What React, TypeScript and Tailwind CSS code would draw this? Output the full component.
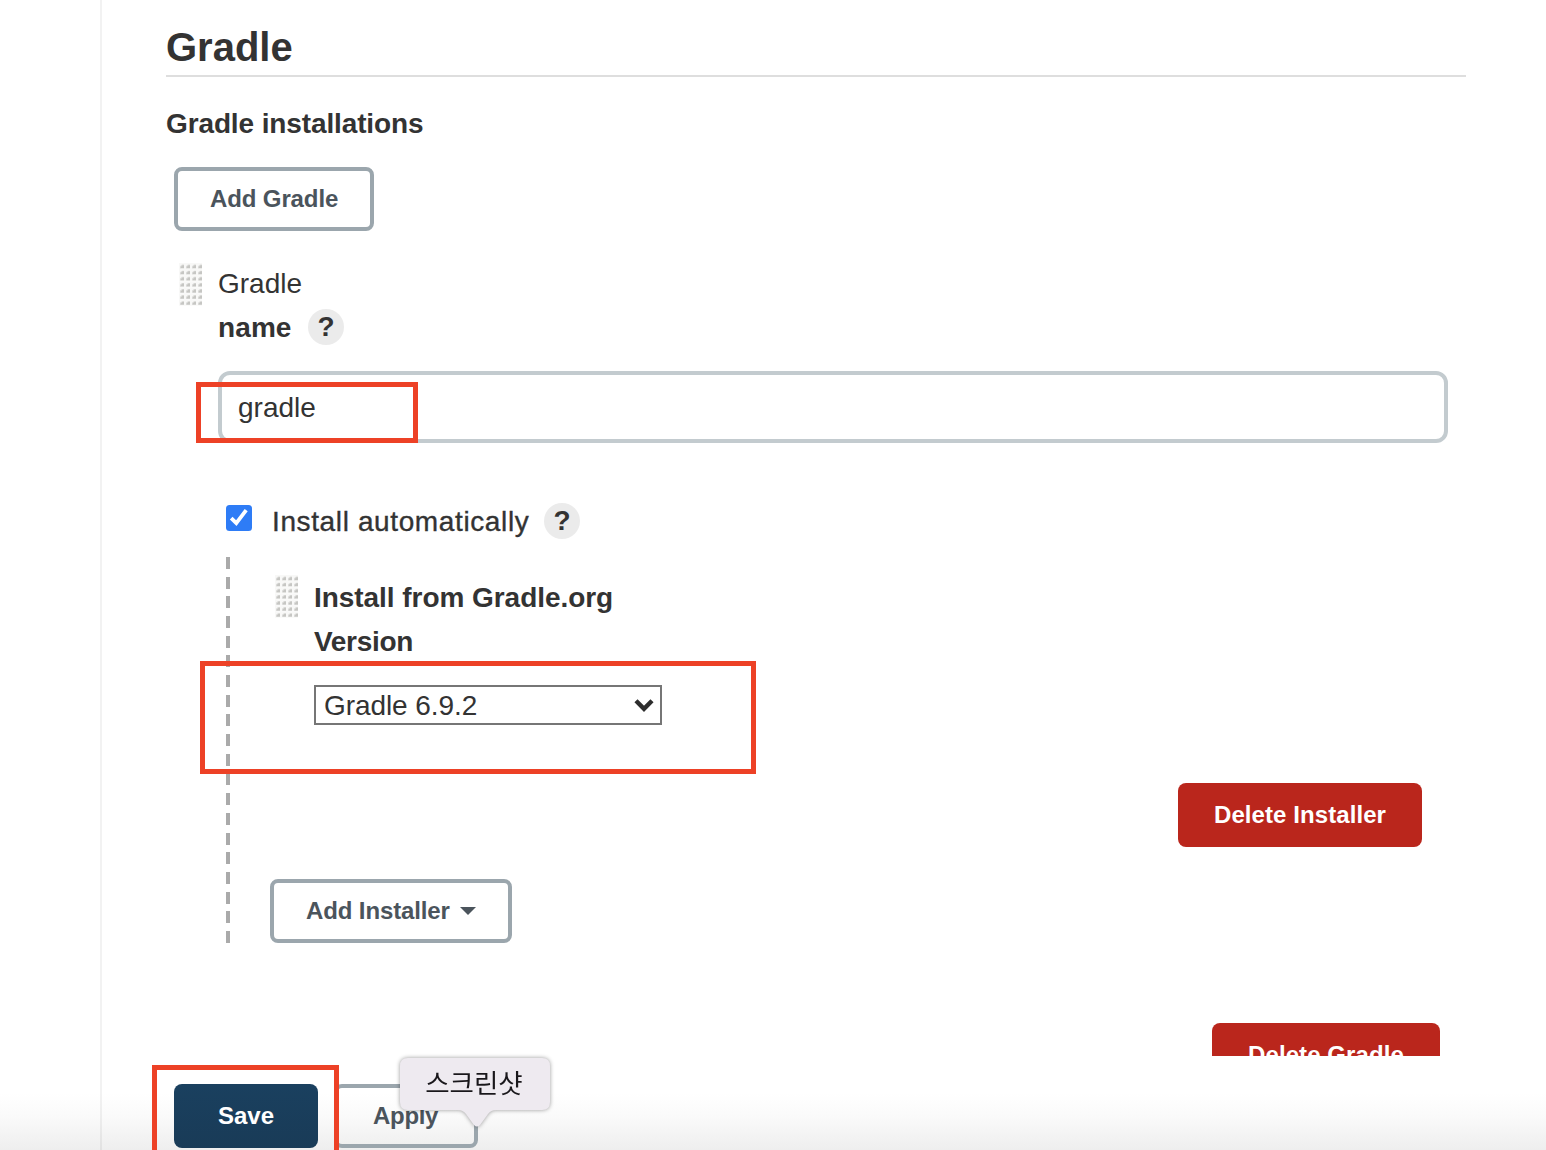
import React from "react";

function Grip({ className = "" }: { className?: string }) {
  return (
    <svg className={`block shrink-0 ${className}`} width="23" height="43" viewBox="0 0 23 43">
      {[0, 1, 2, 3, 4, 5, 6].map((r) =>
        [0, 1, 2, 3].map((c) => {
          const w = c === 3 ? 5 : 6;
          return (
            <g key={`${r}-${c}`} transform={`translate(${c * 6} ${r * 6.1})`}>
              <rect x="0" y="0" width={w} height="6.1" fill="#f8f8f7" />
              <path d="M1 5.4V3.2L3 1.6H5V5.4Z" fill="#dededc" />
              <path d="M1.8 5V4L3.6 2.2H5V5Z" fill="#c6c6c3" />
            </g>
          );
        }),
      )}
    </svg>
  );
}

function Help({ className = "" }: { className?: string }) {
  return (
    <span
      className={`flex h-9 w-9 shrink-0 items-center justify-center rounded-full bg-[#ebebeb] text-[28px] leading-9 font-bold ${className}`}
    >
      ?
    </span>
  );
}

const outlineButton =
  "flex h-16 items-center rounded-lg border-4 border-[#9ba6ad] pl-8 text-[24px] font-bold tracking-[-0.12px] whitespace-nowrap text-[#4b545c]";
const dangerButton =
  "flex h-16 items-center justify-center rounded-lg bg-[#ba261c] text-[24px] font-bold tracking-[0.08px] whitespace-nowrap text-white";

export default function App() {
  return (
    <div className="relative flex h-[1150px] w-[1546px] flex-col overflow-hidden bg-white font-['Liberation_Sans','Noto_Sans_CJK_KR',sans-serif] text-[28px] text-[#333]">
      <main className="ml-[100px] h-[1056px] shrink-0 overflow-hidden border-l-2 border-[#f2f2f2] pr-20 pl-16">
        <h1 className="h-[77px] border-b-2 border-[#dedede] pt-[17px] text-[40px] leading-[60px] font-bold">Gradle</h1>
        <h2 className="mt-[26px] h-10 leading-[42px] font-bold tracking-[-0.12px]">Gradle installations</h2>
        <button className={`mt-6 ml-2 w-[200px] ${outlineButton}`}>Add Gradle</button>

        <section className="mt-[30px] flex">
          <Grip className="mt-0.5 ml-[13px]" />
          <div className="ml-4 w-[1230px]">
            <div className="h-11 leading-[46px]">Gradle</div>
            <div className="flex h-11 items-center font-bold">
              <span className="w-[90px] pt-0.5 tracking-[0.1px]">name</span>
              <Help />
            </div>
            <div className="mt-[22px] flex h-18 items-center rounded-xl border-4 border-[#c3cbcf] pt-0.5 pl-4">gradle</div>

            <div className="mt-[60px] ml-2 flex h-9 items-center">
              <svg className="mb-[6px]" width="26" height="26" viewBox="0 0 26 26">
                <rect width="26" height="26" rx="3.5" fill="#2e7cf6" />
                <path d="M5.2 13.2 10.3 18.2 20.2 5.2" fill="none" stroke="#fff" strokeWidth="3.8" />
              </svg>
              <span className="ml-5 w-[272px] pt-0.5 tracking-[0.62px] whitespace-nowrap [-webkit-text-stroke:0.35px_#333]">
                Install automatically
              </span>
              <Help />
            </div>

            <div className="mt-[18px] ml-2 flex h-[386px] w-[1196px]">
              <div className="w-1 shrink-0 bg-[repeating-linear-gradient(to_bottom,#aaa_0px,#aaa_12px,transparent_12px,transparent_19.68px)]" />
              <div className="flex grow flex-col">
                <div className="mt-[18px] flex">
                  <Grip className="ml-[45px]" />
                  <div className="ml-4 font-bold">
                    <div className="h-11 leading-[46px] tracking-[-0.05px]">Install from Gradle.org</div>
                    <div className="h-11 leading-[46px] tracking-[-0.3px]">Version</div>
                    <div className="mt-[22px] flex h-10 w-[348px] items-center justify-between border-2 border-[#767676] pr-[6px] pl-2 font-normal">
                      <span className="pt-0.5 tracking-[-0.08px]">Gradle 6.9.2</span>
                      <svg width="20" height="14" viewBox="0 0 20 14">
                        <path d="M2 2.8 10 10.8 18 2.8" fill="none" stroke="#2d2d2d" strokeWidth="4.4" />
                      </svg>
                    </div>
                  </div>
                </div>
                <button className={`mt-[58px] w-[244px] self-end ${dangerButton}`}>Delete Installer</button>
                <button className={`mt-8 ml-10 w-[242px] ${outlineButton}`}>
                  Add Installer
                  <svg className="ml-[10px]" width="16" height="8" viewBox="0 0 16 8">
                    <path d="M0 0H16L8 8Z" fill="#4b545c" />
                  </svg>
                </button>
              </div>
            </div>
            <button className={`mt-20 ml-[994px] w-[228px] ${dangerButton}`}>Delete Gradle</button>
          </div>
        </section>
      </main>

      <footer className="h-[94px] shrink-0 bg-linear-to-b from-white from-40% via-[#fafafa] via-65% to-[#eeeeee] pl-[100px]">
        <div className="flex h-full border-l-2 border-black/5 pt-7 pl-[72px]">
          <button className="h-16 w-36 shrink-0 rounded-lg bg-linear-to-b from-[#1a405f] to-[#193b57] text-[24px] font-bold text-white">
            Save
          </button>
          <button className={`ml-4 w-36 ${outlineButton}`}>
            <span className="ml-[3px] tracking-[-0.3px]">Apply</span>
          </button>
        </div>
      </footer>

      {/* Floating screenshot hint */}
      <div className="absolute top-[1058px] left-[400px] h-[70px] w-[151px] drop-shadow-[0_0_2px_rgba(0,0,0,0.4)]">
        <svg className="absolute inset-0" width="151" height="70" viewBox="0 0 151 70">
          <path
            d="M8 0H142Q150 0 150 8V44Q150 52 142 52H96Q91 52 88 56L80 67Q77 70 74 67L66 56Q63 52 58 52H8Q0 52 0 44V8Q0 0 8 0Z"
            fill="#eeeaf0"
          />
        </svg>
        <div className="relative h-[52px] pr-[3px] text-center font-['Noto_Sans_CJK_KR',sans-serif] text-[26.5px] leading-[47px] whitespace-nowrap text-[#19171b]">
          스크린샷
        </div>
      </div>

      {/* Highlight frames */}
      <div className="absolute top-[382px] left-[196px] h-[61px] w-[222px] border-5 border-[#ed4126]" />
      <div className="absolute top-[661px] left-[200px] h-[113px] w-[556px] border-5 border-[#ed4126]" />
      <div className="absolute top-[1065px] left-[152px] h-[100px] w-[187px] border-5 border-[#ed4126]" />
    </div>
  );
}
